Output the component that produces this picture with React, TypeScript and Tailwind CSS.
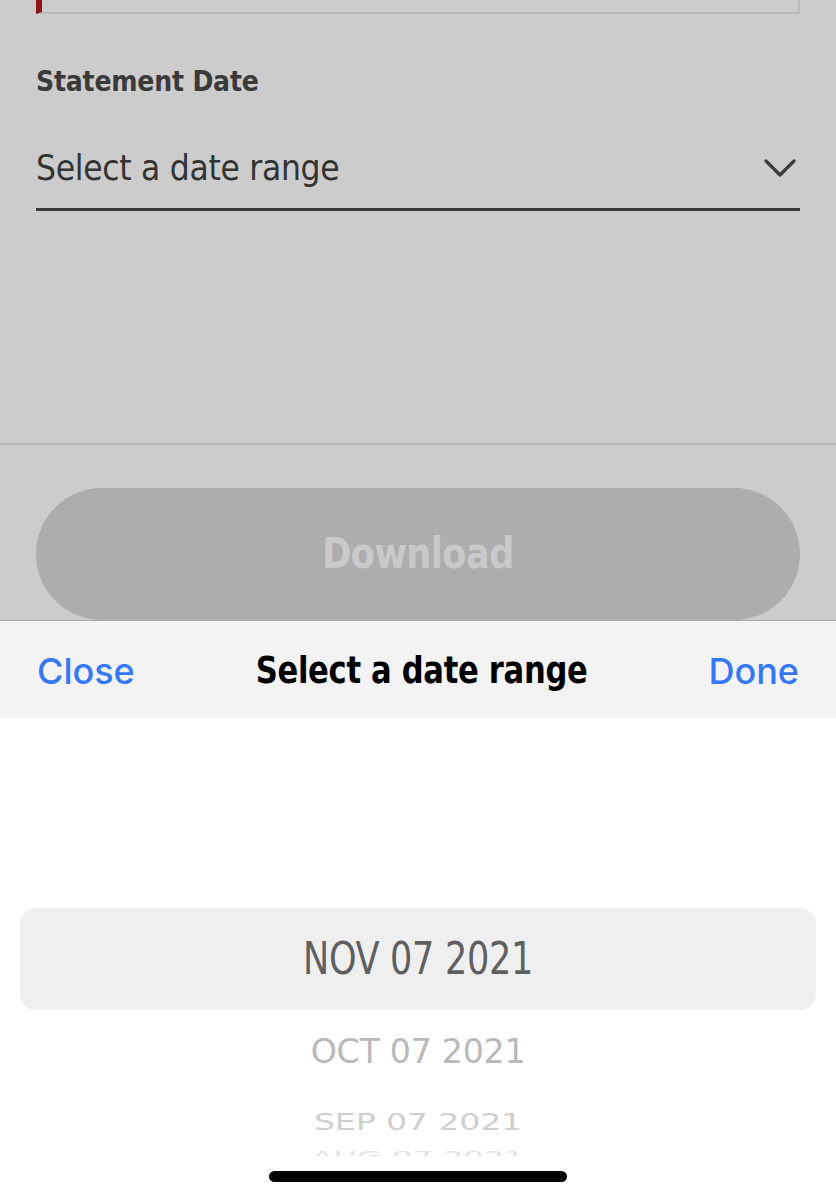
import React from 'react';

const brandFont = { fontFamily: '"DejaVu Sans Condensed", "Liberation Sans Narrow", "Liberation Sans", sans-serif' };
const sysFont = { fontFamily: 'Inter, "Liberation Sans", sans-serif' };

const ChevronDown: React.FC = () => (
  <svg width="32" height="20" viewBox="0 0 32 20" fill="none">
    <polyline points="2,3 16,17 30,3" stroke="#3c3c3c" strokeWidth="3.2" strokeLinecap="round" strokeLinejoin="round" />
  </svg>
);

export default function App() {
  return (
    <div className="relative w-[836px] h-[1200px] overflow-hidden bg-[#cccccc]" style={brandFont}>
      {/* dimmed form behind the sheet */}
      <div className="px-[36px]">
        <div className="h-[14px] border-l-[6px] border-l-[#8e1414] border-r-2 border-r-[#b9b9b9] border-b-2 border-b-[#b9b9b9]" />
        <div className="mt-[52px] text-[28px] leading-[32px] font-bold text-[#3a3a3a] tracking-[-0.2px]">Statement Date</div>
        <div className="mt-[48px] flex items-center justify-between h-[44px] pr-[4px]">
          <span className="text-[35px] text-[#333333] tracking-[-0.3px]">Select a date range</span>
          <ChevronDown />
        </div>
        <div className="mt-[18px] h-[3px] bg-[#3a3a3a]" />
      </div>

      <div className="mt-[232px] h-[2px] bg-[#b7b7b9]" />

      <div className="px-[36px] mt-[43px]">
        <div className="h-[132px] rounded-full bg-[#adadaf] flex items-center justify-center">
          <span className="text-[39px] font-bold text-[#c9c9ca] tracking-[-0.5px] scale-y-[1.08]">Download</span>
        </div>
      </div>

      {/* bottom sheet picker */}
      <div className="absolute left-0 right-0 bottom-0 h-[580px] bg-white flex flex-col">
        <div className="shrink-0 h-[98px] bg-[#f3f3f3] border-t border-[#a9a9a9] flex items-center justify-between px-[37px] pt-[2px]">
          <span className="text-[36px] font-medium text-[#3478f6]" style={sysFont}>Close</span>
          <span className="text-[34px] font-bold text-black tracking-[-0.3px] scale-y-[1.08]">Select a date range</span>
          <span className="text-[36px] font-medium text-[#3478f6]" style={sysFont}>Done</span>
        </div>

        <div className="shrink-0 mt-[190px] mx-[20px] h-[102px] rounded-[16px] bg-[#efeff0] flex items-center justify-center">
          <span className="text-[39px] text-[#5f5f5f] tracking-[-0.3px] scale-y-[1.12]">NOV 07 2021</span>
        </div>

        <div className="shrink-0 h-[190px] flex flex-col items-center">
          <div className="h-[146px] w-full overflow-hidden flex flex-col items-center">
            <div className="shrink-0 mt-[20px] h-[44px] flex items-center text-[37px] text-[#b9b9b9] scale-y-[0.9] tracking-[-0.3px]">OCT 07 2021</div>
            <div className="shrink-0 mt-[34px] h-[30px] flex items-center text-[37px] text-[#cfcfcf] scale-y-[0.62] tracking-[-0.2px]">SEP 07 2021</div>
            <div className="shrink-0 mt-[8px] h-[20px] flex items-center text-[36px] text-[#e2e2e2] scale-y-[0.4] tracking-[-0.2px]">AUG 07 2021</div>
          </div>
          <div className="mt-[15px] w-[298px] h-[11px] rounded-full bg-black" />
        </div>
      </div>
    </div>
  );
}
